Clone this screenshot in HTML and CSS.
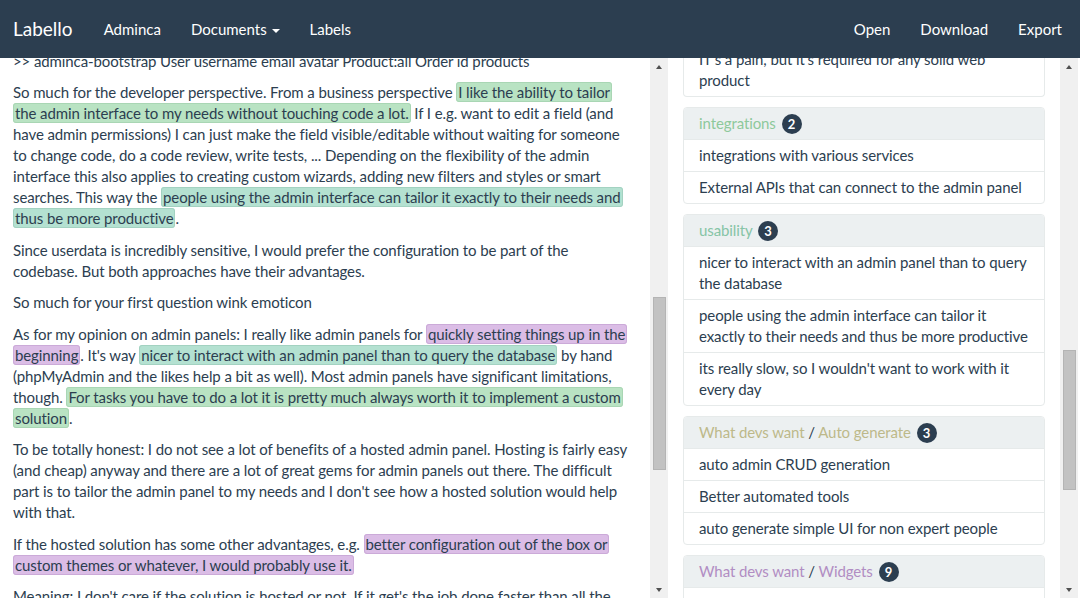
FILE: index.html
```html
<!DOCTYPE html>
<html lang="en">
<head>
<meta charset="utf-8">
<title>Labello</title>
<link rel="stylesheet" href="styles.css">
</head>
<body>
<nav class="navbar">
  <a class="brand" href="#">Labello</a>
  <ul class="nav">
    <li><a href="#">Adminca</a></li>
    <li><a href="#">Documents <span class="caret"></span></a></li>
    <li><a href="#">Labels</a></li>
  </ul>
  <ul class="nav nav-right">
    <li><a href="#">Open</a></li>
    <li><a href="#">Download</a></li>
    <li><a href="#">Export</a></li>
  </ul>
</nav>
<main class="workspace">
  <section class="doc-pane">
    <div class="doc">
      <p>&gt;&gt; adminca-bootstrap User username email avatar Product:all Order id products</p>
      <p>So much for the developer perspective. From a business perspective <span class="hl hl-green">I like the ability to tailor the admin interface to my needs without touching code a lot.</span> If I e.g. want to edit a field (and have admin permissions) I can just make the field visible/editable without waiting for someone to change code, do a code review, write tests, ... Depending on the flexibility of the admin interface this also applies to creating custom wizards, adding new filters and styles or smart searches. This way the <span class="hl hl-teal">people using the admin interface can tailor it exactly to their needs and thus be more productive</span>.</p>
      <p>Since userdata is incredibly sensitive, I would prefer the configuration to be part of the codebase. But both approaches have their advantages.</p>
      <p>So much for your first question wink emoticon</p>
      <p>As for my opinion on admin panels: I really like admin panels for <span class="hl hl-purple">quickly setting things up in the beginning</span>. It's way <span class="hl hl-teal">nicer to interact with an admin panel than to query the database</span> by hand (phpMyAdmin and the likes help a bit as well). Most admin panels have significant limitations, though. <span class="hl hl-green">For tasks you have to do a lot it is pretty much always worth it to implement a custom solution</span>.</p>
      <p>To be totally honest: I do not see a lot of benefits of a hosted admin panel. Hosting is fairly easy (and cheap) anyway and there are a lot of great gems for admin panels out there. The difficult part is to tailor the admin panel to my needs and I don't see how a hosted solution would help with that.</p>
      <p>If the hosted solution has some other advantages, e.g. <span class="hl hl-purple">better configuration out of the box or custom themes or whatever, I would probably use it.</span></p>
      <p>Meaning: I don't care if the solution is hosted or not. If it get's the job done faster than all the other solutions I would use it.</p>
    </div>
  </section>
  <div class="vscroll">
    <span class="sb-btn sb-up"></span>
    <div class="sb-track"><div class="sb-thumb thumb-doc"></div></div>
    <span class="sb-btn sb-down"></span>
  </div>
  <aside class="label-pane">
    <div class="labels">
      <div class="panel panel-cut">
        <ul class="list">
          <li>IT's a pain, but it's required for any solid web product</li>
        </ul>
      </div>
      <div class="panel">
        <div class="panel-heading"><span class="lbl lbl-green">integrations</span> <span class="badge">2</span></div>
        <ul class="list">
          <li>integrations with various services</li>
          <li>External APIs that can connect to the admin panel</li>
        </ul>
      </div>
      <div class="panel">
        <div class="panel-heading"><span class="lbl lbl-teal">usability</span> <span class="badge">3</span></div>
        <ul class="list">
          <li>nicer to interact with an admin panel than to query the database</li>
          <li>people using the admin interface can tailor it exactly to their needs and thus be more productive</li>
          <li>its really slow, so I wouldn't want to work with it every day</li>
        </ul>
      </div>
      <div class="panel">
        <div class="panel-heading"><span class="lbl lbl-khaki">What devs want</span> / <span class="lbl lbl-khaki">Auto generate</span> <span class="badge">3</span></div>
        <ul class="list">
          <li>auto admin CRUD generation</li>
          <li>Better automated tools</li>
          <li>auto generate simple UI for non expert people</li>
        </ul>
      </div>
      <div class="panel">
        <div class="panel-heading"><span class="lbl lbl-purple">What devs want</span> / <span class="lbl lbl-purple">Widgets</span> <span class="badge">9</span></div>
        <ul class="list">
          <li>dashboard widgets</li>
          <li>charts and graphs</li>
        </ul>
      </div>
    </div>
  </aside>
  <div class="vscroll">
    <span class="sb-btn sb-up"></span>
    <div class="sb-track"><div class="sb-thumb thumb-labels"></div></div>
    <span class="sb-btn sb-down"></span>
  </div>
  <div class="edge"></div>
</main>
</body>
</html>
```
FILE: styles.css
```css
* { box-sizing: border-box; }
html, body { margin: 0; padding: 0; }
body {
  font-family: Lato, "Open Sans", "Liberation Sans", sans-serif;
  font-size: 15px;
  line-height: 21px;
  letter-spacing: -0.1px;
  color: #2c3e50;
  background: #fff;
  width: 1080px;
  height: 598px;
  overflow: hidden;
}
a { color: inherit; text-decoration: none; }

.navbar {
  height: 58px;
  background: #2c3e50;
  display: flex;
  align-items: center;
  padding: 0 2px 0 13px;
  position: relative;
  z-index: 2;
  letter-spacing: 0;
}
.brand {
  color: #fff;
  font-size: 19px;
  line-height: 21px;
  padding-right: 16px;
  margin-top: -1px;
}
.nav {
  list-style: none;
  margin: 0;
  padding: 0;
  display: flex;
}
.nav li a {
  display: block;
  color: #fff;
  padding: 0 15px;
  line-height: 21px;
  margin-top: 1px;
}
.nav-right { margin-left: auto; }
.nav-right li:last-child a { padding-right: 16px; }
.caret {
  display: inline-block;
  width: 0;
  height: 0;
  margin-left: 1px;
  vertical-align: middle;
  border-top: 4px solid #fff;
  border-left: 4px solid transparent;
  border-right: 4px solid transparent;
}

.workspace {
  display: flex;
  height: 540px;
}
.doc-pane {
  width: 650px;
  overflow: hidden;
}
.doc {
  padding: 0 20px 0 13px;
  margin-top: -7.5px;
}
.doc p { margin: 0 0 10.5px; }

.hl {
  border: 1px solid;
  border-radius: 3px;
  padding: 0 1px;
  -webkit-box-decoration-break: clone;
  box-decoration-break: clone;
}
.hl-green { background: #b9e3c3; border-color: #a9d6b4; }
.hl-teal { background: #b4e1d1; border-color: #a3d2c1; }
.hl-purple { background: #dbbde6; border-color: #cbaad8; }

.vscroll {
  width: 18px;
  flex: none;
  background: #f0f0f0;
  display: flex;
  flex-direction: column;
  align-items: center;
}
.sb-btn {
  height: 17px;
  width: 18px;
  flex: none;
  display: flex;
  align-items: center;
  justify-content: center;
}
.sb-btn::before {
  content: "";
  width: 0;
  height: 0;
  border-left: 3.5px solid transparent;
  border-right: 3.5px solid transparent;
}
.sb-up::before { border-bottom: 4px solid #505050; }
.sb-down::before { border-top: 4px solid #505050; }
.sb-track { flex: 1; width: 100%; display: flex; flex-direction: column; align-items: center; }
.sb-thumb {
  width: 13px;
  background: #c2c2c2;
  border: 1px solid #b4b4b4;
}
.thumb-doc { margin-top: 222px; height: 173px; }
.thumb-labels { margin-top: 275px; height: 140px; }

.label-pane {
  flex: 1;
  overflow: hidden;
  padding: 0 15px;
}
.labels { margin-top: -14px; }
.panel {
  border: 1px solid #e6eaea;
  border-radius: 4px;
  margin-bottom: 10px;
  background: #fff;
}
.panel-cut { border-top: 0; border-radius: 0 0 4px 4px; }
.panel-heading {
  background: #ecf0f1;
  padding: 5px 15px;
  border-radius: 3px 3px 0 0;
  border-bottom: 1px solid #e6eaea;
}
.lbl-green { color: #8ec99b; }
.lbl-teal { color: #86c4a6; }
.lbl-khaki { color: #bdb98a; }
.lbl-purple { color: #b18dc3; }
.badge {
  display: inline-block;
  min-width: 20px;
  height: 20px;
  padding: 0 6px;
  border-radius: 10px;
  background: #2c3e50;
  color: #fff;
  font-size: 13px;
  font-weight: 700;
  line-height: 20px;
  text-align: center;
  letter-spacing: 0;
  margin-left: 2px;
}
.list { list-style: none; margin: 0; padding: 0; }
.list li {
  padding: 5px 15px;
  border-top: 1px solid #e6eaea;
}
.list li:first-child { border-top: 0; }
.edge { width: 2px; flex: none; }
```
